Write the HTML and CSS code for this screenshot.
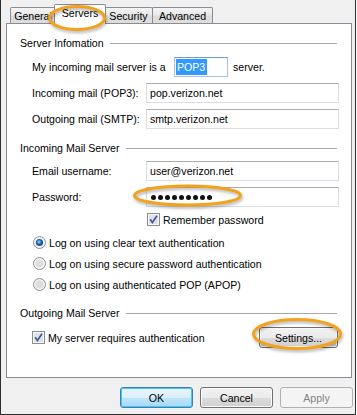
FILE: index.html
```html
<!DOCTYPE html>
<html>
<head>
<meta charset="utf-8">
<title>Servers</title>
<link rel="stylesheet" href="styles.css">
</head>
<body>
<div class="frame">
  <div class="tabs">
    <div class="tab tab-general">General</div>
    <div class="tab tab-servers">Servers</div>
    <div class="tab tab-security">Security</div>
    <div class="tab tab-advanced">Advanced</div>
  </div>
  <div class="panel">
    <div class="ghead"><span>Server Infomation</span><i></i></div>
    <div class="row first">
      <span class="lbl wide">My incoming mail server is a</span>
      <span class="field pop"><span class="sel">POP3</span></span>
      <span class="after">server.</span>
    </div>
    <div class="row">
      <span class="lbl">Incoming mail (POP3):</span>
      <span class="field">pop.verizon.net</span>
    </div>
    <div class="row">
      <span class="lbl">Outgoing mail (SMTP):</span>
      <span class="field">smtp.verizon.net</span>
    </div>

    <div class="ghead g2"><span>Incoming Mail Server</span><i></i></div>
    <div class="row">
      <span class="lbl">Email username:</span>
      <span class="field">user@verizon.net</span>
    </div>
    <div class="row">
      <span class="lbl">Password:</span>
      <span class="field"><span class="dots"><i></i><i></i><i></i><i></i><i></i><i></i><i></i><i></i><i></i></span></span>
    </div>
    <div class="check-row">
      <svg class="box" viewBox="0 0 13 13"><rect x="0.5" y="0.5" width="12" height="12" fill="#f6f6f6" stroke="#8e8f8f"/><rect x="2" y="2" width="9" height="9" fill="#e2e2e2"/><path d="M3.2 6.3 L5.4 9.6 L10 2.8" fill="none" stroke="#3e5a9c" stroke-width="1.7"/></svg>
      <span>Remember password</span>
    </div>
    <div class="radios">
      <div class="radio-row">
        <svg class="box" viewBox="0 0 13 13"><circle cx="6.5" cy="6.5" r="6" fill="#f4f4f4" stroke="#8e8f8f"/><circle cx="6.5" cy="6.5" r="3.6" fill="#1c5a9e"/><circle cx="6" cy="6" r="1.8" fill="#6fb8ee"/></svg>
        <span>Log on using clear text authentication</span>
      </div>
      <div class="radio-row">
        <svg class="box" viewBox="0 0 13 13"><circle cx="6.5" cy="6.5" r="6" fill="#f4f4f4" stroke="#8e8f8f"/><circle cx="6.5" cy="6.5" r="4" fill="#dedede"/></svg>
        <span>Log on using secure password authentication</span>
      </div>
      <div class="radio-row">
        <svg class="box" viewBox="0 0 13 13"><circle cx="6.5" cy="6.5" r="6" fill="#f4f4f4" stroke="#8e8f8f"/><circle cx="6.5" cy="6.5" r="4" fill="#dedede"/></svg>
        <span>Log on using authenticated POP (APOP)</span>
      </div>
    </div>

    <div class="ghead g3"><span>Outgoing Mail Server</span><i></i></div>
    <div class="row last">
      <svg class="box" viewBox="0 0 13 13"><rect x="0.5" y="0.5" width="12" height="12" fill="#f6f6f6" stroke="#8e8f8f"/><rect x="2" y="2" width="9" height="9" fill="#e2e2e2"/><path d="M3.2 6.3 L5.4 9.6 L10 2.8" fill="none" stroke="#3e5a9c" stroke-width="1.7"/></svg>
      <span>My server requires authentication</span>
      <span class="btn settings">Settings...</span>
    </div>
  </div>
  <div class="buttons">
    <span class="btn default">OK</span>
    <span class="btn">Cancel</span>
    <span class="btn disabled">Apply</span>
  </div>
  <svg class="marks" viewBox="0 0 357 415">
    <ellipse cx="77" cy="18" rx="27.5" ry="11.5"/>
    <ellipse cx="187.5" cy="195.5" rx="53" ry="9.5"/>
    <ellipse cx="297" cy="334" rx="43.5" ry="14.5"/>
  </svg>
</div>
</body>
</html>
```
FILE: styles.css
```css
* { box-sizing: border-box; }
html, body { margin: 0; padding: 0; background: #fff; }
body {
  font-family: "Liberation Sans", Arial, sans-serif;
  font-size: 10.6px;
  color: #000;
}
.frame {
  position: relative;
  width: 356px;
  height: 415px;
  background: #f0f0f0;
  border: 1px solid #2e2e2e;
  border-top: none;
  overflow: hidden;
}
.tabs {
  display: flex;
  align-items: flex-end;
  height: 23px;
  padding-left: 9px;
}
.tab {
  height: 16px;
  border: 1px solid #898c95;
  border-bottom: none;
  border-radius: 2px 2px 0 0;
  background: linear-gradient(#f4f4f4, #e8e8e8 45%, #dcdcdc 55%, #dedede);
  display: flex;
  align-items: center;
  justify-content: center;
  padding-top: 1px;
  white-space: nowrap;
}
.tab-general { width: 46px; }
.tab-servers {
  width: 52px;
  height: 20px;
  margin: 0 -2px -1px;
  background: #fff;
  position: relative;
  z-index: 2;
  padding-top: 0;
  padding-bottom: 3px;
}
.tab-security { width: 49px; }
.tab-advanced { width: 61px; margin-left: -1px; }

.panel {
  position: relative;
  z-index: 1;
  margin-left: 5px;
  width: 346px;
  height: 355px;
  border: 1px solid #898c95;
  background: #fff;
  padding: 12px 14px 0 13px;
}
.ghead {
  display: flex;
  align-items: center;
  height: 14px;
}
.ghead i {
  flex: 1;
  height: 1px;
  background: #a8a8a8;
  margin-left: 6px;
}
.g2 { margin-top: 12px; }
.g3 { margin-top: 11px; }

.row {
  display: flex;
  align-items: center;
  height: 20px;
  margin-top: 6px;
  padding-left: 12px;
  margin-right: -2px;
  white-space: nowrap;
}
.row.first { margin-top: 7px; }
.lbl { width: 114px; flex: none; }
.lbl.wide { width: 142px; }
.field {
  flex: 1;
  height: 20px;
  border: 1px solid #dadde4;
  border-top-color: #abadb3;
  background: #fff;
  display: flex;
  align-items: center;
  padding-left: 3px;
}
.field.pop {
  flex: none;
  width: 54px;
  border-color: #a9c4e0;
  border-top-color: #6a9cc8;
  padding-left: 1px;
}
.sel {
  background: #3399ff;
  color: #fff;
  height: 16px;
  display: flex;
  align-items: center;
  padding: 0 2px 0 1px;
}
.after { margin-left: 5px; }
.dots { display: flex; gap: 2px; padding-left: 1px; }
.dots i {
  width: 5px;
  height: 5px;
  border-radius: 50%;
  background: #111;
}
.check-row {
  display: flex;
  align-items: center;
  height: 15px;
  margin-top: 5px;
  padding-left: 127px;
}
.box { width: 13px; height: 13px; margin-right: 3px; flex: none; }
.radios { margin-top: 5px; padding-left: 13px; }
.radio-row { display: flex; align-items: center; height: 21px; }
.row.last { height: 21px; margin-top: 7px; }

.btn {
  width: 73px;
  height: 21px;
  border: 1px solid #707070;
  border-radius: 3px;
  background: linear-gradient(#f2f2f2 0%, #ebebeb 50%, #dddddd 50%, #cfcfcf 100%);
  box-shadow: inset 0 0 0 1px #fbfbfb;
  display: flex;
  align-items: center;
  justify-content: center;
  flex: none;
}
.btn.settings { width: 79px; margin-left: auto; margin-right: 1px; }
.btn.default {
  border-color: #3c7fb1;
  background: linear-gradient(#eaf6fd 0%, #d9f0fc 50%, #bee6fd 50%, #a7d9f5 100%);
  box-shadow: inset 0 0 0 1px #48c5f6;
}
.btn.disabled {
  border-color: #adb2b5;
  background: #f4f4f4;
  box-shadow: none;
  color: #838383;
}
.buttons {
  display: flex;
  justify-content: flex-end;
  gap: 7px;
  margin-top: 9px;
  padding-right: 2px;
}
.marks {
  position: absolute;
  top: 0;
  left: -1px;
  width: 357px;
  height: 415px;
  z-index: 5;
  pointer-events: none;
  fill: none;
  stroke: #f2a31b;
  stroke-width: 3;
  filter: drop-shadow(1px 2px 1.5px rgba(0, 0, 0, 0.3));
}
```
